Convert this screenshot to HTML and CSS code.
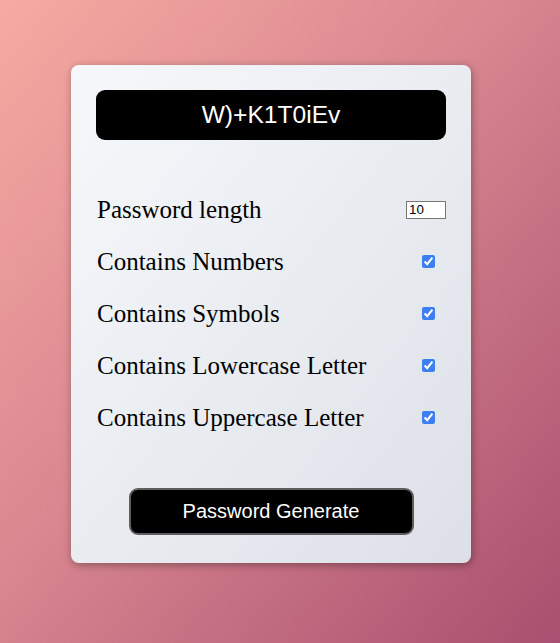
FILE: index.html
```html
<!DOCTYPE html>
<html>
<head>
<meta charset="utf-8">
<link rel="stylesheet" href="styles.css">
</head>
<body>
  <div class="card">
    <div class="display">W)+K1T0iEv</div>
    <div class="options">
      <div class="row">
        <label for="len">Password length</label>
        <input id="len" class="len" type="number" value="10">
      </div>
      <div class="row">
        <label for="num">Contains Numbers</label>
        <input id="num" class="check" type="checkbox" checked>
      </div>
      <div class="row">
        <label for="sym">Contains Symbols</label>
        <input id="sym" class="check" type="checkbox" checked>
      </div>
      <div class="row">
        <label for="low">Contains Lowercase Letter</label>
        <input id="low" class="check" type="checkbox" checked>
      </div>
      <div class="row">
        <label for="up">Contains Uppercase Letter</label>
        <input id="up" class="check" type="checkbox" checked>
      </div>
    </div>
    <div class="actions">
      <button class="generate">Password Generate</button>
    </div>
  </div>
</body>
</html>
```
FILE: styles.css
```css
html, body {
  margin: 0;
  padding: 0;
}
body {
  width: 560px;
  height: 643px;
  box-sizing: border-box;
  padding: 65px 0 0 71px;
  background: linear-gradient(to bottom right, #f6aaa1 0%, #d98790 45%, #a94f6f 100%);
  font-family: "Liberation Serif", "Times New Roman", serif;
  overflow: hidden;
}
.card {
  width: 400px;
  box-sizing: border-box;
  padding: 25px 25px 28px;
  border-radius: 8px;
  background: linear-gradient(to bottom right, #f6f8fb 0%, #e9ecf1 50%, #dde1e7 100%);
  box-shadow: 1px 2px 9px rgba(0, 0, 0, 0.35);
}
.display {
  height: 50px;
  border-radius: 9px;
  background: #000;
  color: #fff;
  font-family: "Liberation Sans", Arial, sans-serif;
  font-size: 24.6px;
  display: flex;
  align-items: center;
  justify-content: center;
}
.options {
  margin-top: 55.6px;
  display: flex;
  flex-direction: column;
  gap: 24px;
}
.row {
  display: flex;
  align-items: center;
  justify-content: space-between;
  height: 28px;
  padding-left: 1px;
  font-size: 25px;
  line-height: 28px;
  color: #000;
}
.len {
  width: 40px;
  height: 18px;
  box-sizing: border-box;
  margin: 0;
  padding: 1px 2px;
  border: 1px solid #767676;
  font-family: "Liberation Sans", Arial, sans-serif;
  font-size: 13.33px;
  line-height: normal;
  background: #fff;
  appearance: textfield;
  -moz-appearance: textfield;
}
.len::-webkit-inner-spin-button,
.len::-webkit-outer-spin-button {
  -webkit-appearance: none;
  margin: 0;
}
.check {
  width: 13px;
  height: 13px;
  margin: 3px 11px 3px 4px;
  accent-color: #3d7ff0;
}
.actions {
  margin-top: 56.4px;
  display: flex;
  justify-content: center;
}
.generate {
  width: 285px;
  height: 47px;
  border: 2px solid #5e5e5e;
  border-radius: 9px;
  background: #000;
  color: #fff;
  font-family: "Liberation Sans", Arial, sans-serif;
  font-size: 20px;
  padding: 0;
}
```
